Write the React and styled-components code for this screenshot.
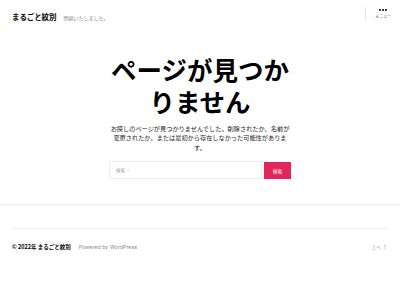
import React from "react";
import styled, { createGlobalStyle } from "styled-components";

const GlobalStyle = createGlobalStyle`
  html, body {
    margin: 0;
    padding: 0;
    background: #ffffff;
  }
  body {
    font-family: "Noto Sans CJK JP", "Noto Sans", sans-serif;
    color: #000000;
  }
`;

const Page = styled.div`
  width: 400px;
  height: 300px;
  display: flex;
  flex-direction: column;
  overflow: hidden;
`;

const Header = styled.header`
  display: flex;
  align-items: center;
  justify-content: space-between;
  height: 32px;
  padding: 0 8px 0 12px;
`;

const Brand = styled.div`
  display: flex;
  align-items: baseline;
  gap: 7px;
`;

const SiteTitle = styled.div`
  font-size: 7.5px;
  font-weight: 700;
  letter-spacing: -0.1px;
`;

const Tagline = styled.div`
  font-size: 5px;
  color: #8a8a8a;
`;

const MenuArea = styled.div`
  display: flex;
  align-items: stretch;
  height: 13px;
  gap: 8px;
  margin-top: -6px;
`;

const Divider = styled.div`
  width: 1px;
  background: #e6e6e6;
`;

const MenuToggle = styled.div`
  display: flex;
  flex-direction: column;
  align-items: center;
  width: 18px;
  padding-top: 2px;
  gap: 2px;
`;

const Dots = styled.div`
  display: flex;
  gap: 1.2px;
  & span {
    width: 2px;
    height: 2px;
    border-radius: 50%;
    background: #000;
  }
`;

const MenuLabel = styled.div`
  font-size: 4px;
  color: #333;
  white-space: nowrap;
`;

const Main = styled.main`
  width: 182px;
  margin: 21px auto 0;
  display: flex;
  flex-direction: column;
  align-items: center;
`;

const Title = styled.h1`
  margin: 0;
  font-size: 25.5px;
  line-height: 32px;
  font-weight: 700;
  text-align: center;
`;

const Intro = styled.p`
  margin: 7px 0 0;
  font-size: 6.2px;
  line-height: 9.3px;
  text-align: center;
  color: #222;
`;

const SearchForm = styled.form`
  display: flex;
  width: 182px;
  gap: 2px;
  margin-top: 9px;
`;

const SearchInput = styled.div`
  flex: 1;
  height: 18px;
  box-sizing: border-box;
  border: 1px solid #ececec;
  display: flex;
  align-items: center;
  padding-left: 6px;
  font-size: 4.5px;
  color: #9a9a9a;
`;

const SearchButton = styled.div`
  width: 27px;
  height: 17px;
  margin-top: 1px;
  background: #e2265b;
  color: #fff;
  font-size: 4.8px;
  display: flex;
  align-items: center;
  justify-content: center;
`;

const Rule = styled.div`
  height: 1px;
  background: ${(p) => p.color || "#ebebeb"};
  margin: ${(p) => p.margin || "0"};
`;

const Footer = styled.footer`
  padding: 0 12px;
`;

const FooterRow = styled.div`
  display: flex;
  align-items: center;
  justify-content: space-between;
  margin-top: 14px;
`;

const FooterLeft = styled.div`
  display: flex;
  align-items: baseline;
  gap: 8px;
`;

const Copyright = styled.span`
  font-size: 5.5px;
  font-weight: 700;
`;

const Powered = styled.span`
  font-size: 5.3px;
  color: #8a8a8a;
  font-family: "Inter", "Noto Sans", sans-serif;
`;

const ToTop = styled.span`
  font-size: 4.8px;
  color: #9a9a9a;
  padding-right: 1px;
`;

export default function App() {
  return (
    <Page>
      <GlobalStyle />
      <Header>
        <Brand>
          <SiteTitle>まるごと紋別</SiteTitle>
          <Tagline>閉鎖いたしました。</Tagline>
        </Brand>
        <MenuArea>
          <Divider />
          <MenuToggle>
            <Dots>
              <span />
              <span />
              <span />
            </Dots>
            <MenuLabel>メニュー</MenuLabel>
          </MenuToggle>
        </MenuArea>
      </Header>
      <Main>
        <Title>ページが見つかりません</Title>
        <Intro>
          お探しのページが見つかりませんでした。削除されたか、名前が変更されたか、または最初から存在しなかった可能性があります。
        </Intro>
        <SearchForm>
          <SearchInput>検索 …</SearchInput>
          <SearchButton>検索</SearchButton>
        </SearchForm>
      </Main>
      <Rule margin="25px 0 0" />
      <Footer>
        <Rule margin="23px 0 0" color="#f0f0f0" />
        <FooterRow>
          <FooterLeft>
            <Copyright>© 2022年 まるごと紋別</Copyright>
            <Powered>Powered by WordPress</Powered>
          </FooterLeft>
          <ToTop>上へ ↑</ToTop>
        </FooterRow>
      </Footer>
    </Page>
  );
}
